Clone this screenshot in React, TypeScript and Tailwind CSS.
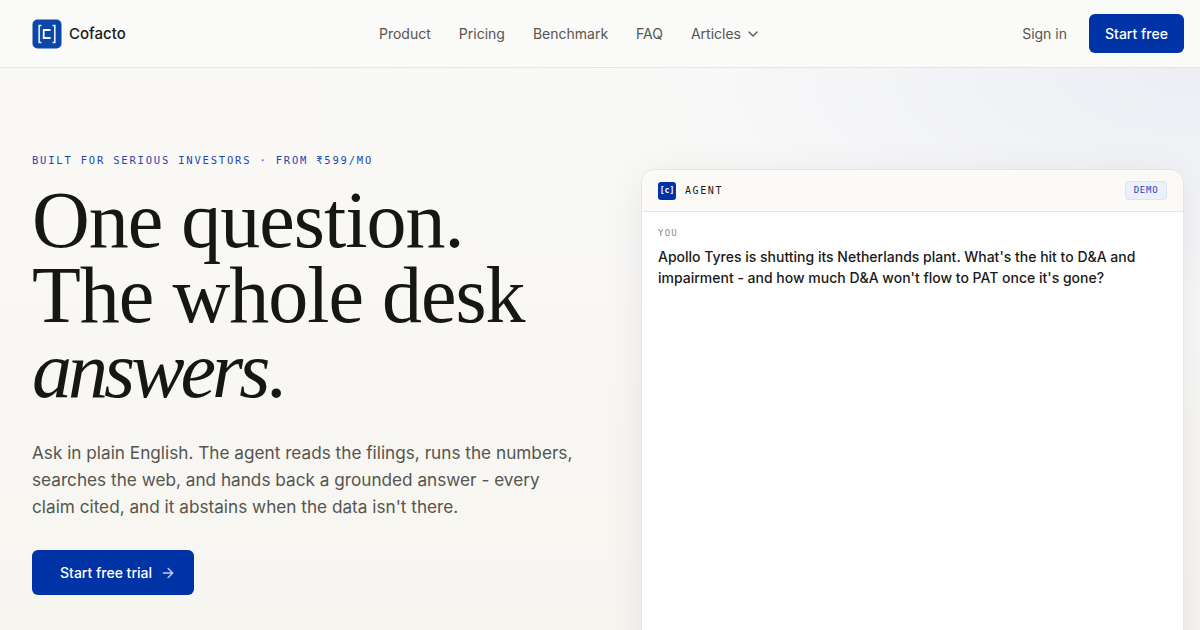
import React from 'react';
import { ArrowRight, ChevronDown } from 'lucide-react';

const navItems = ['Product', 'Pricing', 'Benchmark', 'FAQ'];

const inter = 'font-[Inter,sans-serif]';
const mono = "font-['DejaVu_Sans_Mono',monospace]";

const Logo: React.FC = () => (
  <svg width="30" height="30" viewBox="0 0 30 30" className="shrink-0">
    <rect x="0.5" y="0.5" width="29" height="29" rx="5" fill="#0a47a9" />
    <path d="M9.5 6.5H7.2V23.5H9.5" fill="none" stroke="#dfe8f7" strokeWidth="1.7" />
    <path d="M20.5 6.5H22.8V23.5H20.5" fill="none" stroke="#dfe8f7" strokeWidth="1.7" />
    <path d="M18.5 11H11.7V19H18.5" fill="none" stroke="#ffffff" strokeWidth="1.8" />
  </svg>
);

const Header: React.FC = () => (
  <header className="h-[68px] shrink-0 border-b border-[#e6e5e2] bg-[#fafaf8] pl-8 pr-4 flex items-center justify-between relative">
    <div className="flex items-center gap-[7px]">
      <Logo />
      <span className="pt-[2px] text-[15px] font-medium text-[#1a1a1a]">Cofacto</span>
    </div>
    <nav className="absolute left-[379px] top-0 h-full flex items-center gap-7 text-sm text-[#55554f]">
      {navItems.map((item) => (
        <span key={item}>{item}</span>
      ))}
      <span className="flex items-center gap-1">
        Articles <ChevronDown className="w-4 h-4" strokeWidth={2} />
      </span>
    </nav>
    <div className="flex items-center gap-[22px]">
      <span className="text-sm text-[#55554f]">Sign in</span>
      <button className="h-[39px] w-[95px] rounded-md bg-[#0033a6] text-sm font-medium text-white">Start free</button>
    </div>
  </header>
);

const Hero: React.FC = () => (
  <div className="w-[641px] shrink-0 pl-8 pt-[85px]">
    <p className={`${mono} text-[10.5px] leading-[15px] tracking-[1.8px] text-[#1f46b4]`}>
      BUILT FOR SERIOUS INVESTORS · FROM ₹599/MO
    </p>
    <h1 className="mt-[15px] font-['Liberation_Serif',serif] text-[80px] leading-[75px] tracking-[-1px] text-[#161616]">
      One question.
      <br />
      The whole desk
      <br />
      <em className="tracking-[-4px]">answers</em>.
    </h1>
    <p className="mt-[31px] w-[545px] text-[17.2px] leading-[27px] text-[#55554f]">
      Ask in plain English. The agent reads the filings, runs the numbers, searches the web, and hands back a grounded answer - every claim cited, and it abstains when the data isn't there.
    </p>
    <button className="mt-[30px] h-[45px] w-[162px] rounded-md bg-[#0033a6] pl-7 flex items-center gap-2 text-sm font-medium text-white">
      Start free trial
      <ArrowRight className="w-4 h-4 text-[#c5d0ec]" />
    </button>
  </div>
);

const AgentCard: React.FC = () => (
  <div className="mt-[101px] w-[543px] h-[520px] rounded-t-[14px] border border-[#e6e5e2] bg-white shadow-[0_8px_40px_rgba(30,30,40,0.08)] overflow-hidden">
    <div className="h-[42px] border-b border-[#e6e5e2] bg-[#fbfaf7] px-4 flex items-center justify-between">
      <div className="flex items-center gap-[9px]">
        <div className={`${mono} w-[18px] h-[18px] rounded-[3px] bg-[#0033a6] flex items-center justify-center text-[8px] font-bold text-white`}>[c]</div>
        <span className={`${mono} text-[10px] font-medium tracking-[0.16em] text-[#1a1a1a]`}>AGENT</span>
      </div>
      <span className={`${mono} h-[19px] w-[42px] rounded-[4px] border border-[#d9e2f8] bg-[#ebf0fc] flex items-center justify-center text-[9px] font-medium tracking-[0.08em] text-[#1f46b4]`}>DEMO</span>
    </div>
    <div className="px-4 pt-[15px]">
      <p className={`${mono} text-[9px] leading-[13px] tracking-[0.14em] text-[#8b8b85]`}>YOU</p>
      <p className="mt-[6px] text-sm leading-[21px] font-[450] text-[#1a1a1a]">
        Apollo Tyres is shutting its Netherlands plant. What's the hit to D&amp;A and impairment - and how much D&amp;A won't flow to PAT once it's gone?
      </p>
    </div>
  </div>
);

const App: React.FC = () => (
  <div className={`${inter} w-[1200px] h-[630px] overflow-hidden flex flex-col bg-[#f7f6f2]`}>
    <Header />
    <main className="flex-1 flex bg-[radial-gradient(ellipse_900px_420px_at_100%_0%,#eceef4_0%,#f8f8f8_55%,transparent_100%),linear-gradient(180deg,#faf9f6_0%,#f6f5f0_100%)]">
      <Hero />
      <AgentCard />
    </main>
  </div>
);

export default App;
